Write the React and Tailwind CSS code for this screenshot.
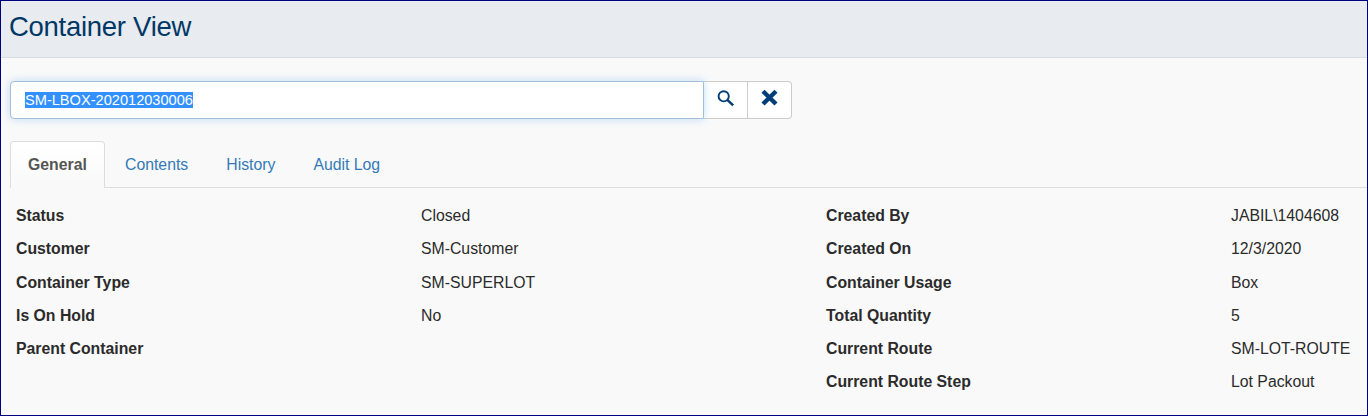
const tabs = ["Contents", "History", "Audit Log"];

const leftFields = [
  ["Status", "Closed"],
  ["Customer", "SM-Customer"],
  ["Container Type", "SM-SUPERLOT"],
  ["Is On Hold", "No"],
  ["Parent Container", ""],
];

const rightFields = [
  ["Created By", "JABIL\\1404608"],
  ["Created On", "12/3/2020"],
  ["Container Usage", "Box"],
  ["Total Quantity", "5"],
  ["Current Route", "SM-LOT-ROUTE"],
  ["Current Route Step", "Lot Packout"],
];

function FieldList({ fields }) {
  return (
    <dl className="w-[810px] shrink-0">
      {fields.map(([label, value]) => (
        <div key={label} className="flex h-[33.2px] items-center">
          <dt className="w-[405px] shrink-0 font-bold">{label}</dt>
          <dd className="whitespace-nowrap">{value}</dd>
        </div>
      ))}
    </dl>
  );
}

function SearchIcon() {
  return (
    <svg width="18" height="18" viewBox="0 0 18 18" fill="none" stroke="#003d79">
      <circle cx="6.7" cy="6.3" r="5.1" strokeWidth="1.9" />
      <path d="M10.3 9.9l5.9 5.5" strokeWidth="2.5" />
    </svg>
  );
}

function CloseIcon() {
  return (
    <svg className="-ml-px" width="17" height="17" viewBox="0 0 17 17" fill="none" stroke="#003d79" strokeWidth="4.4">
      <path d="M2 2.2l13 12.8M15 2.2L2 15" />
    </svg>
  );
}

export default function App() {
  return (
    <div className="h-[416px] w-[1368px] overflow-hidden border border-[#000080] bg-[#f9f9f9] font-['Liberation_Sans',Arial,sans-serif] text-[15.8px] leading-6 text-[#2b2b2b]">
      <header className="h-[57px] border-b border-[#d5dce3] bg-[#e8ebf0] pl-2 pt-1.5">
        <h1 className="text-[27.5px] leading-10 tracking-[-0.28px] text-[#003865]">Container View</h1>
      </header>

      <div className="ml-[9px] mt-[23px] flex h-[38px] w-[782px]">
        <div className="z-10 flex w-[694px] items-center rounded-l-[4px] border border-[#a3bfd9] bg-white pl-3.5 shadow-[0_0_8px_rgba(102,175,233,0.4)]">
          <span className="bg-[#3390ff] text-[14.6px] leading-4 text-white">SM-LBOX-202012030006</span>
        </div>
        <button aria-label="Search" className="flex w-11 items-start justify-center border-y border-r border-[#cccccc] bg-white pt-2">
          <SearchIcon />
        </button>
        <button aria-label="Clear" className="flex w-11 items-start justify-center rounded-r-[4px] border-y border-r border-[#cccccc] bg-white pt-[7px]">
          <CloseIcon />
        </button>
      </div>

      <nav className="mt-[22px] flex h-[47px]">
        <div className="w-[9px] shrink-0" />
        <a className="flex w-[95px] shrink-0 items-center rounded-t-[4px] border-x border-t border-[#dddddd] bg-linear-to-b from-white to-[#f9f9f9] pl-[17px] font-bold text-[#555555]">General</a>
        <div className="flex grow items-center gap-[38px] border-b border-[#dddddd] pl-5 pt-px text-[#337ab7]">
          {tabs.map((tab) => (
            <a key={tab}>{tab}</a>
          ))}
        </div>
      </nav>

      <main className="flex pl-[15px] pt-[11.6px]">
        <FieldList fields={leftFields} />
        <FieldList fields={rightFields} />
      </main>
    </div>
  );
}
